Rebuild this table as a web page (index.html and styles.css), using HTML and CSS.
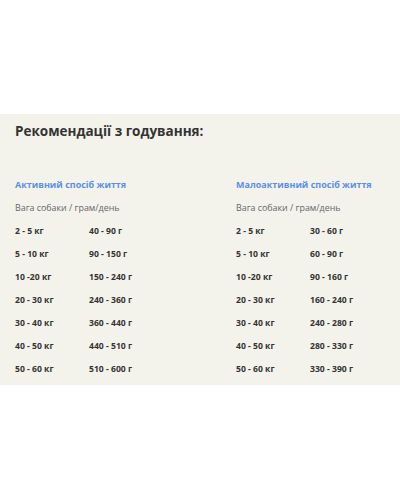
FILE: index.html
```html
<!DOCTYPE html>
<html>
<head>
<meta charset="utf-8">
<link rel="stylesheet" href="styles.css">
</head>
<body>
<div class="top"></div>
<section class="panel">
  <h2 class="title">Рекомендації з годування:</h2>
  <div class="cols">
    <div class="col">
      <div class="sub">Активний спосіб життя</div>
      <div class="label">Вага собаки / грам/день</div>
      <div class="row"><span class="w">2 - 5 кг</span><span>40 - 90 г</span></div>
      <div class="row"><span class="w">5 - 10 кг</span><span>90 - 150 г</span></div>
      <div class="row"><span class="w">10 -20 кг</span><span>150 - 240 г</span></div>
      <div class="row"><span class="w">20 - 30 кг</span><span>240 - 360 г</span></div>
      <div class="row"><span class="w">30 - 40 кг</span><span>360 - 440 г</span></div>
      <div class="row"><span class="w">40 - 50 кг</span><span>440 - 510 г</span></div>
      <div class="row"><span class="w">50 - 60 кг</span><span>510 - 600 г</span></div>
    </div>
    <div class="col">
      <div class="sub">Малоактивний спосіб життя</div>
      <div class="label">Вага собаки / грам/день</div>
      <div class="row"><span class="w">2 - 5 кг</span><span>30 - 60 г</span></div>
      <div class="row"><span class="w">5 - 10 кг</span><span>60 - 90 г</span></div>
      <div class="row"><span class="w">10 -20 кг</span><span>90 - 160 г</span></div>
      <div class="row"><span class="w">20 - 30 кг</span><span>160 - 240 г</span></div>
      <div class="row"><span class="w">30 - 40 кг</span><span>240 - 280 г</span></div>
      <div class="row"><span class="w">40 - 50 кг</span><span>280 - 330 г</span></div>
      <div class="row"><span class="w">50 - 60 кг</span><span>330 - 390 г</span></div>
    </div>
  </div>
</section>
</body>
</html>
```
FILE: styles.css
```css
html, body { margin: 0; padding: 0; background: #fff; }
body { font-family: "Open Sans", "DejaVu Sans", sans-serif; color: #333; }
.top { height: 114px; }
.panel {
  background: #f3f3ec;
  height: 271px;
  padding: 0 15px;
  box-sizing: border-box;
  overflow: hidden;
}
.title {
  margin: 0;
  padding-top: 7px;
  font-size: 13.5px;
  line-height: 20px;
  font-weight: 700;
  color: #333;
}
.cols { display: flex; margin-top: 37px; }
.col { width: 221px; flex: none; }
.sub {
  font-size: 9px;
  font-weight: 700;
  color: #5b8ee6;
  line-height: 14px;
}
.label {
  margin-top: 9px;
  font-size: 8.9px;
  line-height: 14px;
  color: #666;
}
.row {
  display: flex;
  margin-top: 9px;
  font-size: 8.6px;
  font-weight: 700;
  line-height: 14px;
  color: #333;
}
.w { width: 74px; flex: none; }
```
